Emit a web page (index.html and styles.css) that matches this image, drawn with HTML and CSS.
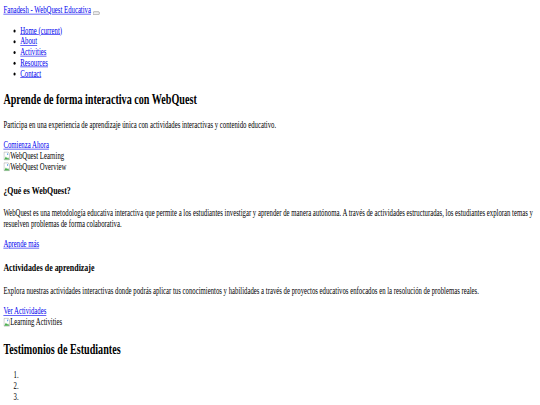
FILE: index.html
```html
<!DOCTYPE html>
<html lang="es">
<head>
<meta charset="utf-8">
<title>Fanadesh - WebQuest Educativa</title>
<link rel="stylesheet" href="styles.css">
</head>
<body class="body">
<div class="frame">
<div class="viewport">
<div class="page">
  <nav class="navbar">
    <a class="brand" href="#">Fanadesh - WebQuest Educativa</a>
    <button class="toggler" type="button"><span class="toggler-icon"></span></button>
    <div class="nav-collapse">
      <ul class="nav-list">
        <li class="nav-item"><a class="link" href="#">Home <span class="sr">(current)</span></a></li>
        <li class="nav-item"><a class="link" href="#">About</a></li>
        <li class="nav-item"><a class="link" href="#">Activities</a></li>
        <li class="nav-item"><a class="link" href="#">Resources</a></li>
        <li class="nav-item"><a class="link" href="#">Contact</a></li>
      </ul>
    </div>
  </nav>

  <section class="hero">
    <h2 class="title-lg">Aprende de forma interactiva con WebQuest</h2>
    <p class="text">Participa en una experiencia de aprendizaje única con actividades interactivas y contenido educativo.</p>
    <a class="link" href="#">Comienza Ahora</a>
    <div class="broken"><svg class="broken-icon" viewBox="0 0 16 16" width="16" height="16"><path d="M1.5 1.5h10l3 3v10h-13z" fill="#fff" stroke="#9a9a9a"/><path d="M2 14l4-5 3 3 2-2 3 4z" fill="#4caf50"/><circle cx="10" cy="5" r="1.5" fill="#6aa7e8"/></svg>WebQuest Learning</div>
    <div class="broken"><svg class="broken-icon" viewBox="0 0 16 16" width="16" height="16"><path d="M1.5 1.5h10l3 3v10h-13z" fill="#fff" stroke="#9a9a9a"/><path d="M2 14l4-5 3 3 2-2 3 4z" fill="#4caf50"/><circle cx="10" cy="5" r="1.5" fill="#6aa7e8"/></svg>WebQuest Overview</div>
  </section>

  <section class="about">
    <h3 class="title-md">¿Qué es WebQuest?</h3>
    <p class="text">WebQuest es una metodología educativa interactiva que permite a los estudiantes investigar y aprender de manera autónoma. A través de actividades estructuradas, los estudiantes exploran temas y resuelven problemas de forma colaborativa.</p>
    <p class="text"><a class="link" href="#">Aprende más</a></p>
  </section>

  <section class="activities">
    <h3 class="title-md">Actividades de aprendizaje</h3>
    <p class="text">Explora nuestras actividades interactivas donde podrás aplicar tus conocimientos y habilidades a través de proyectos educativos enfocados en la resolución de problemas reales.</p>
    <a class="link" href="#">Ver Actividades</a>
    <div class="broken"><svg class="broken-icon" viewBox="0 0 16 16" width="16" height="16"><path d="M1.5 1.5h10l3 3v10h-13z" fill="#fff" stroke="#9a9a9a"/><path d="M2 14l4-5 3 3 2-2 3 4z" fill="#4caf50"/><circle cx="10" cy="5" r="1.5" fill="#6aa7e8"/></svg>Learning Activities</div>
  </section>

  <section class="testimonials">
    <h2 class="title-lg">Testimonios de Estudiantes</h2>
    <ol class="indicators">
      <li class="indicator"></li>
      <li class="indicator"></li>
      <li class="indicator"></li>
    </ol>
  </section>
</div>
</div>
</div>
</body>
</html>
```

FILE: styles.css
```css
.body {
  margin: 0;
  overflow: hidden;
  background: #fff;
}
.frame {
  width: 540px;
  height: 405px;
  overflow: hidden;
}
.viewport {
  width: 1280px;
  height: 675px;
  overflow: hidden;
  transform: scale(0.421875, 0.6);
  transform-origin: 0 0;
}
.page {
  padding: 8px;
  font-family: "Liberation Serif", "Times New Roman", serif;
  font-size: 16px;
  color: #000;
}
.link {
  color: #0000ee;
  text-decoration: underline;
}
.nav-list {
  margin: 16px 0;
  padding-left: 40px;
  list-style: disc;
}
.title-lg {
  font-size: 24px;
  font-weight: bold;
  margin: 19.92px 0;
}
.title-md {
  font-size: 18.72px;
  font-weight: bold;
  margin: 18.72px 0;
}
.text {
  margin: 16px 0;
}
.broken-icon {
  vertical-align: -3px;
}
.testimonials {
  padding-top: 3px;
}
.indicators {
  margin: 18px 0;
  padding-left: 40px;
}
```
